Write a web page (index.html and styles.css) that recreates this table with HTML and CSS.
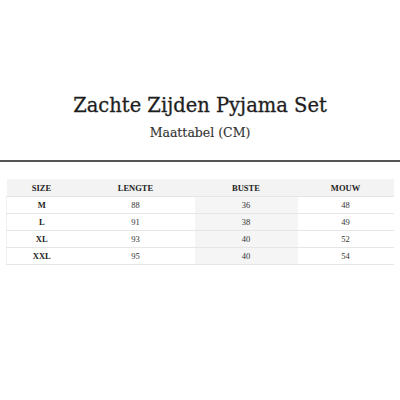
FILE: index.html
```html
<!DOCTYPE html>
<html>
<head>
<meta charset="utf-8">
<link rel="stylesheet" href="styles.css">
</head>
<body>
<div class="page">
  <header class="head">
    <h1 class="title">Zachte Zijden Pyjama Set</h1>
    <p class="subtitle">Maattabel (CM)</p>
  </header>
  <div class="rule"></div>
  <table class="sizes">
    <colgroup>
      <col class="c-size">
      <col class="c-len">
      <col class="c-bust">
      <col class="c-sleeve">
    </colgroup>
    <thead>
      <tr><th>SIZE</th><th>LENGTE</th><th class="shade">BUSTE</th><th>MOUW</th></tr>
    </thead>
    <tbody>
      <tr><td class="sz">M</td><td>88</td><td class="shade">36</td><td>48</td></tr>
      <tr><td class="sz">L</td><td>91</td><td class="shade">38</td><td>49</td></tr>
      <tr><td class="sz">XL</td><td>93</td><td class="shade">40</td><td>52</td></tr>
      <tr><td class="sz">XXL</td><td>95</td><td class="shade">40</td><td>54</td></tr>
    </tbody>
  </table>
</div>
</body>
</html>
```
FILE: styles.css
```css
html, body {
  margin: 0;
  padding: 0;
  background: #ffffff;
}
.page {
  width: 400px;
  height: 400px;
  font-family: "Liberation Serif", "Times New Roman", serif;
  color: #222222;
}
.head {
  padding-top: 92px;
  text-align: center;
}
.title {
  margin: 0;
  font-family: "DejaVu Serif", "Liberation Serif", serif;
  font-size: 19.5px;
  line-height: 28px;
  font-weight: normal;
  color: #1e1e1e;
  -webkit-text-stroke: 0.3px #1e1e1e;
}
.subtitle {
  margin: 4px 0 0 0;
  font-family: "DejaVu Serif", "Liberation Serif", serif;
  font-size: 12.5px;
  line-height: 18px;
  color: #333333;
  -webkit-text-stroke: 0.15px #333333;
}
.rule {
  margin-top: 18px;
  height: 2px;
  background: #555555;
}
.sizes {
  margin: 17px 0 0 6px;
  width: 387px;
  border-collapse: collapse;
  table-layout: fixed;
  font-size: 8.5px;
  color: #222222;
}
.c-size { width: 70px; }
.c-len { width: 118px; }
.c-bust { width: 103px; }
.c-sleeve { width: 96px; }
.sizes th {
  background: #f3f3f3;
  font-weight: bold;
  height: 17px;
  padding: 0;
  text-align: center;
  color: #222222;
  border-bottom: 1px solid #e6e6e6;
}
.sizes td {
  height: 16px;
  padding: 0;
  text-align: center;
  color: #333333;
  border-bottom: 1px solid #e6e6e6;
}
.sizes td.sz {
  font-weight: bold;
  color: #222222;
}
.sizes td.shade {
  background: #f5f5f5;
}
.num {
  opacity: 0.99;
}
.sizes tbody tr td:first-child {
  border-left: 1px solid #f0f0f0;
}
```
